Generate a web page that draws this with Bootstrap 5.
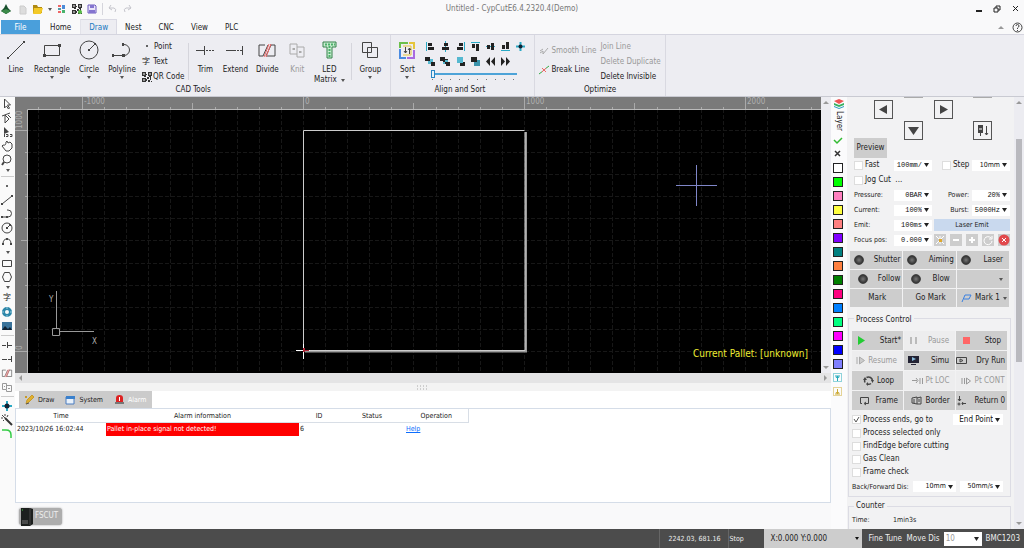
<!DOCTYPE html>
<html lang="en">
<head>
<meta charset="utf-8">
<meta name="viewport" content="width=device-width, initial-scale=1">
<title>Untitled - CypCutE6.4.2320.4(Demo)</title>
<link href="https://cdn.jsdelivr.net/npm/bootstrap@5.3.0/dist/css/bootstrap.min.css" rel="stylesheet">
<style>
body{font-family:"DejaVu Sans Condensed","Noto Sans CJK SC",sans-serif;font-size:8px;line-height:10px;color:#222;background:#f9f9fa;height:100vh;overflow:hidden}
button{border:0;padding:0;background:none;color:inherit;font:inherit;line-height:inherit}
svg{display:block;flex:none}
.ln{fill:none;stroke:#444;stroke-width:1}
.caret{width:0;height:0;border:2px solid transparent;border-top:3px solid #555;border-bottom:0;flex:none}
.dim{color:#999}
/* title bar and tabs */
.titlebar{height:20px;color:#777;padding-bottom:2px}
.qat{gap:5px}
.tabs{height:14px;gap:1px}
.tabs button{padding:3px 8px 1px}
.tabs .file{background:#4a9fdb;color:#fff;width:39px;margin:0 1px;padding-top:2px}
.tabs .active{background:#ededf2;color:#1878c0;box-shadow:0 0 0 1px #d9d9e3;clip-path:inset(-1px -1px 0 -1px);margin-left:1px}
/* ribbon */
.ribbon{background:#ededf2;border-top:1px solid #d5d5df;border-bottom:1px solid #c9cad2;height:63px}
.rgroup{border-right:1px solid #d9d9e1;padding-top:4px}
.rgroup.sorting{padding-right:6px}
.rname{margin-top:auto;padding-bottom:1px;text-align:center}
.tool{width:32px;display:flex;flex-direction:column;align-items:center;height:43px;white-space:nowrap}
.tool svg{width:24px;height:22px;margin-bottom:4px}
.tool .caret{margin-top:1px}
.w40{width:40px}.w36{width:36px}.w34{width:34px}.w28{width:28px}
.vsep{width:1px;background:#d5d5dc;align-self:stretch;margin:4px 2px}
.mini{display:flex;align-items:center;height:15px;gap:1px;white-space:nowrap}
.al svg{width:15px;height:15px}
.meter{appearance:none;width:86px;height:12px;background:linear-gradient(#4da3d8,#4da3d8) 0 4px/100% 2px no-repeat,repeating-linear-gradient(90deg,#777 0 1px,transparent 1px 9px) 1px 10px/100% 1px no-repeat;display:block;margin:0 0 0 8px}
.meter::-webkit-slider-thumb{appearance:none;width:4px;height:8px;background:#e8f4fb;border:1px solid #2a86c4;margin-top:-2px}
/* side bars */
.ltools{width:15px;background:#fafafa}
.ltools button{width:14px;height:14px;display:block}
.ltools .drop{height:7px;display:flex;justify-content:center;align-items:center}
.ltools hr{margin:2px 1px;opacity:1;border-color:#ccc;border-top-width:1px}
.layers{width:16px;background:#fbfbfc;padding:1px 0 0 2px}
.layers button{width:10px;height:10px;margin:2px 0 4px;display:block}
.sw{border:1px solid #222}
.lname{writing-mode:vertical-rl;line-height:12px;height:24px;padding-top:2px}
/* drawing area */
.stage{background:#000;height:276px;position:relative}
.stage svg text{font-size:8px;fill:#b0b0b0}
.pallet{position:absolute;right:13px;bottom:12px;color:#ee3;font-size:10px;line-height:14px}
.vbar{width:10px;background:#ececf1}
.hbar{height:10px;background:#e4e4e5}
.split{height:8px;background:#f3f3f3}
.up,.down,.left{width:0;height:0;border:3px solid transparent}
.up{border-bottom-color:#999;border-top:0}
.down{border-top-color:#999;border-bottom:0}
.left{border-right-color:#999;border-left:0}
.flip{transform:scaleX(-1)}
/* lower pane */
.logtabs button{background:#cbcbcb;height:17px;display:flex;align-items:center;gap:3px;font-size:7px;padding:0 6px 0 5px}
.logbox{border:1px solid #d5dde8;background:#fff;height:95px;font-size:7px}
.logbox table{width:452px;table-layout:fixed;line-height:13px}
.logbox th{font-weight:400;text-align:center;border-bottom:1px solid #d8dee6;border-top:0;padding:1px 0 0;line-height:12px}
.logbox th:last-child{border-right:1px solid #d8dee6}
.logbox td{padding:0 1px;white-space:nowrap}
.fs{background:#adadad;color:#eee;border-radius:3px;height:17px;padding:0 4px 0 2px;box-shadow:0 0 2px #999;display:flex;align-items:center;gap:2px}
/* control panel */
.panel{width:177px;background:#f9f9fa}
.pbody{background:#f2f2f3;padding:0 5px 0 3px;min-width:0}
.pad{display:grid;grid-template-columns:20px 19px 11px 19px 11px 19px 20px 19px;grid-template-rows:1px 2px 19px 2px 17px 2px 18px;padding-left:4px}
.pad button{border:1px solid #555;display:grid;place-items:center}
.pad .prev{border:0;background:#cdcdcd;width:33px}
.parm{display:grid;grid-template-columns:40px 38px 2px 38px 38px;grid-auto-rows:12px;row-gap:3px;align-items:center;padding:1px 0 1px 4px;font-size:7px}
.parm .r{text-align:right;padding-right:3px}
.combo{appearance:none;border:0;border-radius:0;height:11px;width:100%;background:#fff url("data:image/svg+xml,%3Csvg xmlns='http://www.w3.org/2000/svg' width='5' height='4'%3E%3Cpath d='M0 0h5L2.5 4z' fill='%23222'/%3E%3C/svg%3E") right 3px center no-repeat;font:7px/11px "Liberation Mono",monospace;padding:0 10px 0 0;text-align-last:right;color:#111}
.combo.sans{font-family:inherit}
.combo.endsel{width:50px;font-size:8px}
.combo.dis{width:44px}
.combo.tune{width:38px;height:14px;text-align-last:left;font-size:8px;color:#999}
.tick{appearance:none;width:9px;height:9px;border:1px solid #ddd;background:#fff;margin:0;flex:none}
.tick:checked{background:#fff url("data:image/svg+xml,%3Csvg xmlns='http://www.w3.org/2000/svg' width='7' height='7'%3E%3Cpath d='M1 3l2 3 3-5' fill='none' stroke='%23555'/%3E%3C/svg%3E") center no-repeat}
.chk{display:flex;align-items:center;gap:2px;font-size:8px}
.checks{gap:3px;margin-top:3px}
.fine{font-size:7px}
.emit{background:#c9d9ee;height:12px;grid-column:4/6}
.sq{background:#cdcdcd;width:12px;height:12px}
.btns{display:grid;grid-template-columns:repeat(3,minmax(0,1fr));gap:1px}
.btns button{background:#cdcdcd;height:18px;display:flex;align-items:center;justify-content:space-between;padding:0 2px 0 4px;white-space:nowrap}
.btns.proc{margin-top:6px}
.btns.proc button{height:19px}
.btns button.off{background:#ededee;color:#999}
.btns button.mid{justify-content:center;gap:3px}
.lamp{width:10px;height:10px;border-radius:50%;background:radial-gradient(#777,#333 70%);border:1px solid #444}
.box{border:1px solid #dcdce4;padding:0 3px;margin:4px -2px 0}
.box legend{float:none;width:auto;font-size:8px;line-height:10px;margin:0 0 0 2px;padding:0 2px}
.thumb{width:6px;height:223px;margin:35px auto auto 2px;background:#b9b9be}
/* status bar */
.status{height:19px;background:#4c4c4c;color:#eee}
.status .cell{border-left:1px solid #666;font-size:7px}
.coord{background:#cdcdcd;color:#222;width:98px;padding:0 3px 0 6px}
.coord .caret{border-top-color:#111}
.tunelabel{padding-left:6px}
</style>
</head>
<body class="d-flex flex-column">
<svg width="0" height="0" class="position-absolute" aria-hidden="true">
<defs>
<symbol id="line" viewBox="0 0 14 14"><path class="ln" d="M2 11L12 3"/><path d="M1 10h2v2H1zM11 2h2v2h-2z" fill="#444"/></symbol>
<symbol id="poly" viewBox="0 0 14 14"><path class="ln" d="M2 10h6a3.500 3.500 0 0 0 0-7H7"/><path d="M1 9h2v2H1zM6 9h2v2H6z" fill="#444"/></symbol>
<symbol id="circ" viewBox="0 0 14 14"><circle class="ln" cx="7" cy="7" r="5"/><path class="ln" d="M7 7l3-3"/><path d="M6 6h2v2H6zM9 3h2v2H9z" fill="#444"/></symbol>
<symbol id="trim" viewBox="0 0 24 22"><path class="ln" d="M3 11.500h8M11.500 7v9"/><path class="ln" stroke-dasharray="2 1" d="M13 11.500h8"/></symbol>
<symbol id="extend" viewBox="0 0 24 22"><path class="ln" d="M3 11.500h8M19.500 7v9"/><path class="ln" stroke-dasharray="2 1" d="M11 11.500h8"/></symbol>
<symbol id="divide" viewBox="0 0 24 22"><path class="ln" d="M10 6H4v11h4l5-11M15 6h5v11h-9l5-11"/><path d="M14 5L9 18M16 5l-5 13" stroke="#e66" fill="none"/></symbol>
<symbol id="knit" viewBox="0 0 24 22"><path d="M5 5h7v3h7v10h-7v-3H5zM12 8v7M7 10h3M14 13h3" stroke="#aaa" fill="none"/><path d="M8 9h2v2H8zM14 12h2v2h-2z" fill="#aaa"/></symbol>
<symbol id="qr" viewBox="0 0 10 10"><path d="M0 0h4v4H0zM6 0h4v4H6zM0 6h4v4H0zM5 5h2v2H5zM8 5h1v3H8zM6 8h2v2H6zM9 9h1v1H9zM4 2h1v1H4zM2 4h2v1H2zM7 4h2v1H7zM4 7h1v2H4z" fill="#333"/><path d="M1 1h2v2H1zM7 1h2v2H7zM1 7h2v2H1z" fill="#999"/></symbol>
<symbol id="cross" viewBox="0 0 14 14"><path d="M7 2v10M2 7h10" stroke="#29a9c5" stroke-width="2"/><circle cx="7" cy="7" r="2.500" fill="#123"/></symbol>
</defs>
</svg>

<header class="flex-shrink-0">
<div class="titlebar d-flex align-items-center position-relative">
 <div class="qat d-flex align-items-center">
  <svg width="12" height="12" viewBox="0 0 12 12"><path d="M6 1l2 4 3 3-5 3-5-3 3-3z" fill="#174d2c"/><path d="M1 8l5-2 5 2-5 3z" fill="#3c8a4a"/></svg>
  <svg width="10" height="12" viewBox="0 0 10 12"><path d="M3 3h4l2 2v6H3z" fill="#ddd" stroke="#ccc"/></svg>
  <svg width="11" height="12" viewBox="0 0 11 12"><path d="M1 2h4l1 2h4v6H1z" fill="#b08a12"/><path d="M2 5h9l-2 6H1z" fill="#f3c928"/></svg>
  <span class="caret"></span>
  <svg width="10" height="12" viewBox="0 0 10 12"><path d="M1 2h3v2H1zM1 8h3v2H1z" fill="#e66"/><path d="M1 5h3v2H1z" fill="#59a"/><path d="M5 2h3v4H5z" fill="#4b8bd8"/><path d="M5 7h3v3H5z" fill="#49b36c"/></svg>
  <svg width="10" height="10"><use href="#qr"/><circle cx="8" cy="8" r="2" fill="#5b4"/></svg>
  <svg width="10" height="10" viewBox="0 0 10 10"><path d="M1 1h7l1 1v7H1z" fill="#e9e4fa" stroke="#6c5bc0"/><path d="M3 1h4v3H3zM2 6h6v3H2z" fill="#8474d0"/></svg>
  <span class="vsep m-0"></span>
  <svg width="24" height="10" viewBox="0 0 24 10"><path d="M1 4h5q3 1 1 4M3 1L1 4l3 2M23 4h-5q-3 1-1 4M21 1l2 3-3 2" fill="none" stroke="#c5c5cc"/></svg>
 </div>
 <div class="position-absolute start-50 translate-middle-x">Untitled - CypCutE6.4.2320.4(Demo)</div>
 <div class="d-flex align-items-center ms-auto gap-2 pe-1">
  <button aria-label="Minimize"><svg width="10" height="10"><path d="M2 6h6v2H2z" fill="#222"/></svg></button>
  <button aria-label="Restore"><svg width="10" height="10"><path d="M2 4h4v4H2zM4 4V2h4v4H6" fill="none" stroke="#222"/></svg></button>
  <button aria-label="Close"><svg width="10" height="10"><path d="M3 2l5 5M8 2L3 7" stroke="#222"/></svg></button>
 </div>
</div>
<nav class="tabs d-flex align-items-stretch">
 <button class="file">File</button><button>Home</button><button class="active">Draw</button><button>Nest</button><button>CNC</button><button>View</button><button>PLC</button>
 <div class="ms-auto d-flex align-items-center gap-2"><span class="up"></span>
 <svg width="12" height="11"><circle cx="5.500" cy="5.500" r="4.500" fill="none" stroke="#444"/><path d="M4 4q0-1.500 1.500-1.500T7 4q0 1-1.500 2v1M5.500 8v1" fill="none" stroke="#444"/></svg></div>
</nav>
</header>

<div class="ribbon d-flex flex-shrink-0">
 <div class="rgroup d-flex flex-column pe-1">
  <div class="d-flex">
   <button class="tool"><svg viewBox="0 0 24 22"><path class="ln" d="M4 19L20 3"/><path d="M3 18h2v2H3zM19 2h2v2h-2z" fill="#444"/></svg>Line</button>
   <button class="tool w40"><svg viewBox="0 0 24 22"><path class="ln" d="M4.500 6.500h15v10h-15z"/><path d="M3 15h3v3H3zM18 5h3v3h-3z" fill="#444"/></svg>Rectangle<span class="caret"></span></button>
   <button class="tool w34"><svg viewBox="0 0 24 22"><circle class="ln" cx="12" cy="11" r="9"/><path class="ln" d="M12 11l6-6"/><path d="M11 10h2v2h-2zM17 4h2v2h-2z" fill="#444"/></svg>Circle<span class="caret"></span></button>
   <button class="tool"><svg viewBox="0 0 24 22"><path class="ln" d="M3 16.500h11a5.500 5.500 0 0 0 0-11h-1"/><path d="M2 15h2v3H2zM12 15h3v3h-3zM12 4h2v3h-2z" fill="#444"/></svg>Polyline<span class="caret"></span></button>
   <div class="ps-1">
    <button class="mini"><svg width="11" height="10"><circle cx="5" cy="4" r="1" fill="#333"/></svg>Point</button>
    <button class="mini"><span>字</span>&nbsp;Text</button>
    <button class="mini"><svg width="10" height="10"><use href="#qr"/></svg>QR Code</button>
   </div>
   <span class="vsep ms-1"></span>
   <button class="tool w28"><svg><use href="#trim"/></svg>Trim</button>
   <button class="tool"><svg><use href="#extend"/></svg>Extend</button>
   <button class="tool"><svg><use href="#divide"/></svg>Divide</button>
   <button class="tool w28 dim"><svg><use href="#knit"/></svg>Knit</button>
   <button class="tool w36"><svg viewBox="0 0 24 22"><path d="M6 3h13v5h-4v11h-5V8H6z" fill="#c9ecd0" stroke="#35824b"/><path d="M8 5.500h10M12.500 7v11" stroke="#4ab06a" stroke-width="2" stroke-dasharray="2 1" fill="none"/></svg>LED<span class="d-flex align-items-center gap-1">Matrix <i class="caret"></i></span></button>
   <span class="vsep ms-1"></span>
   <button class="tool"><svg viewBox="0 0 24 22"><path class="ln" d="M4.500 3.500h9v10h-9zM9.500 8.500h10v10h-10z"/></svg>Group<span class="caret"></span></button>
  </div>
  <div class="rname">CAD Tools</div>
 </div>
 <div class="rgroup sorting d-flex flex-column">
  <div class="d-flex">
   <button class="tool"><svg viewBox="0 0 24 22"><path d="M5 9V4h8" fill="none" stroke="#6cc04a" stroke-width="2"/><path d="M14 4h5v6" fill="none" stroke="#e5c53a" stroke-width="2"/><path d="M5 10v9h6" fill="none" stroke="#4a8be0" stroke-width="2"/><path d="M19 11v8h-7" fill="none" stroke="#a86be0" stroke-width="2"/><path d="M8 7h8v9H8" fill="none" stroke="#e5c53a"/><path class="ln" d="M10.500 8v6M9 12l1.500 2 1.500-2M14.500 15V9M13 11l1.500-2 1.500 2"/></svg>Sort<span class="caret"></span></button>
   <div>
    <div class="d-flex al">
     <button class="mini" aria-label="Align left"><svg viewBox="0 0 15 15"><path d="M3.500 3v9" stroke="#29a9c5"/><path d="M5 4h4v3H5zM5 8h6v3H5z" fill="#222"/></svg></button>
     <button class="mini" aria-label="Align center"><svg viewBox="0 0 15 15"><path d="M7.500 2v11" stroke="#29a9c5"/><path d="M6 4h4v3H6zM4 8h7v3H4z" fill="#222"/></svg></button>
     <button class="mini" aria-label="Align right"><svg viewBox="0 0 15 15"><path d="M11.500 3v9" stroke="#29a9c5"/><path d="M6 4h4v3H6zM4 8h6v3H4z" fill="#222"/></svg></button>
     <button class="mini" aria-label="Align top"><svg viewBox="0 0 15 15"><path d="M3 3.500h9" stroke="#29a9c5"/><path d="M4 5h3v4H4zM8 5h3v7H8z" fill="#222"/></svg></button>
     <button class="mini" aria-label="Align middle"><svg viewBox="0 0 15 15"><path d="M3 7.500h9" stroke="#29a9c5"/><path d="M4 6h3v4H4zM8 4h3v7H8z" fill="#222"/></svg></button>
     <button class="mini" aria-label="Align bottom"><svg viewBox="0 0 15 15"><path d="M3 11.500h9" stroke="#29a9c5"/><path d="M4 6h3v4H4zM8 3h3v7H8z" fill="#222"/></svg></button>
     <button class="mini" aria-label="Align both"><svg viewBox="0 0 15 15"><path d="M7.500 3v9M3 7.500h9" stroke="#29a9c5" stroke-width="2"/><circle cx="7.500" cy="7.500" r="2" fill="#123"/></svg></button>
    </div>
    <div class="d-flex al">
     <button class="mini" aria-label="Order 1"><svg viewBox="0 0 15 15"><path d="M5 5h5v5H5z" fill="#55b8d0"/><path d="M2 3h5v4H2zM8 8h4v4H8z" fill="#222"/></svg></button>
     <button class="mini" aria-label="Order 2"><svg viewBox="0 0 15 15"><path d="M5 5h5v5H5z" fill="#222"/><path d="M7 6h3v2H7zM5 8h2v2H5z" fill="#55b8d0"/><path d="M2 3h5v4H2zM8 8h4v4H8z" fill="#222"/></svg></button>
     <button class="mini" aria-label="Order 3"><svg viewBox="0 0 15 15"><path d="M7 8h5v4H7z" fill="#222"/><path d="M4 3h6v6H4z" fill="#55b8d0"/></svg></button>
     <button class="mini" aria-label="Order 4"><svg viewBox="0 0 15 15"><path d="M6 6h6v6H6z" fill="#3a93ac"/><path d="M3 3h6v5H3z" fill="#222"/></svg></button>
     <button class="mini" aria-label="Previous"><svg viewBox="0 0 15 15"><path d="M7 3v9L3 7.500zM12 3v9L8 7.500z" fill="#222"/></svg></button>
     <button class="mini" aria-label="Next"><svg viewBox="0 0 15 15"><path d="M3 3v9l4-4.500zM8 3v9l4-4.500z" fill="#222"/></svg></button>
    </div>
    <input class="meter" type="range" min="0" max="10" value="0" aria-label="Sort step">
   </div>
  </div>
  <div class="rname">Align and Sort</div>
 </div>
 <div class="rgroup d-flex flex-column">
  <div class="d-flex gap-1 ps-1 pe-1">
   <div class="d-flex flex-column gap-1 pt-1">
    <button class="mini dim"><svg width="11" height="10"><path d="M1 7l3-2v3l5-6M1 5l3-2" fill="none" stroke="#aaa"/></svg>Smooth Line</button>
    <button class="mini"><svg width="11" height="10"><path d="M0 9l4-3M6 4l4-3" stroke="#3a4"/><path d="M3 3l4 4M7 3L3 7" stroke="#e66"/></svg>Break Line</button>
   </div>
   <div>
    <button class="mini dim">Join Line</button><button class="mini dim">Delete Duplicate</button><button class="mini">Delete Invisible</button>
   </div>
  </div>
  <div class="rname">Optimize</div>
 </div>
</div>

<main class="d-flex flex-grow-1 overflow-hidden">
 <div class="ltools">
  <button aria-label="Select"><svg width="14" height="14"><path class="ln" d="M4.500 2v9l2-2 2 3 1-1-2-3h3z"/></svg></button>
  <button aria-label="Node"><svg width="14" height="14"><path class="ln" d="M2 5l8-3M5 4v8l4-4zM8 4l3 3"/></svg></button>
  <button aria-label="Sequence"><svg width="14" height="14"><path d="M4 2v7l5-2z" fill="#444"/><path class="ln" d="M4.500 9v3M6 9.500h2v2H6M10 9.500h2v2h-2"/></svg></button>
  <button aria-label="Pan"><svg width="14" height="14"><path class="ln" d="M3 6q3 1 3-3l1-1 1 2 2-1 2 2v4l-3 3H6L2 7z"/></svg></button>
  <button aria-label="Zoom"><svg width="14" height="14"><circle class="ln" cx="7" cy="6" r="4"/><path d="M4 9l-2 3" stroke="#444" stroke-width="2"/></svg></button>
  <span class="drop"><i class="caret"></i></span><hr>
  <button aria-label="Point"><svg width="14" height="14"><circle cx="7" cy="7" r="1" fill="#333"/></svg></button>
  <button aria-label="Line"><svg width="14" height="14"><use href="#line"/></svg></button>
  <button aria-label="Polyline"><svg width="14" height="14"><use href="#poly"/></svg></button>
  <button aria-label="Circle"><svg width="14" height="14"><use href="#circ"/></svg></button>
  <button aria-label="Arc"><svg width="14" height="14"><path class="ln" d="M3 9q0-5 4-5t4 5"/><path d="M2 8h2v2H2zM10 8h2v2h-2zM6 3h2v2H6z" fill="#444"/></svg></button>
  <span class="drop"><i class="caret"></i></span>
  <button aria-label="Rectangle"><svg width="14" height="14"><path class="ln" d="M2.500 4.500h9v6h-9z"/></svg></button>
  <button aria-label="Polygon"><svg width="14" height="14"><path class="ln" d="M4.500 2.500h5l2 4.500-2 4.500h-5L2.500 7z"/></svg></button>
  <span class="drop"><i class="caret"></i></span>
  <button>字</button>
  <button aria-label="Ring"><svg width="14" height="14"><circle cx="7" cy="7" r="3.500" fill="none" stroke="#2c86a8" stroke-width="3"/><path d="M7 2v2M7 10v2M2 7h2M10 7h2" stroke="#9cd"/></svg></button>
  <button aria-label="Picture"><svg width="14" height="14"><path d="M2 3h10v8H2z" fill="#39729a"/><path d="M2 11l3-4 3 3 2-2 2 3z" fill="#123"/></svg></button>
  <hr>
  <button aria-label="Trim"><svg width="14" height="14"><path class="ln" d="M2 7.500h4M7.500 4v6M8 7.500h4"/></svg></button>
  <button aria-label="Extend"><svg width="14" height="14"><path class="ln" d="M2 7.500h5M8 7.500h3M11.500 4v6"/></svg></button>
  <button aria-label="Divide"><svg width="14" height="14" viewBox="0 0 24 22"><use href="#divide"/></svg></button>
  <button aria-label="Knit"><svg width="14" height="14"><path d="M2.500 3.500h4v2h5v6h-5v-2h-4zM6.500 5v4M4 6.500h1M8 8.500h2" fill="none" stroke="#999"/></svg></button>
  <hr>
  <button aria-label="Center"><svg width="14" height="14"><use href="#cross"/></svg></button>
  <button aria-label="Wand"><svg width="14" height="14"><path d="M5 5l7 7" stroke="#333" stroke-width="2"/><path class="ln" d="M2 2l3 3M5 1v2M1 5h2M8 2L7 4M3 8l1-1"/></svg></button>
  <button aria-label="Round corner"><svg width="14" height="14"><path d="M2 3h4q5 0 5 5v3" fill="none" stroke="#3c4" stroke-width="1.500"/></svg></button>
 </div>

 <section class="flex-grow-1 d-flex flex-column overflow-hidden">
  <div class="d-flex">
   <div class="stage flex-grow-1">
    <svg width="100%" height="100%">
     <defs>
      <pattern id="gv" x="67" y="0" width="221" height="600" patternUnits="userSpaceOnUse"><path d="M.5 0v600M22.500 0v600M44.500 0v600M66.500 0v600M88.500 0v600M110.500 0v600M133.500 0v600M155.500 0v600M177.500 0v600M199.500 0v600" stroke="#171717" stroke-dasharray="4 2"/></pattern>
      <pattern id="gh" x="0" y="33" width="1200" height="221" patternUnits="userSpaceOnUse"><path d="M0 .5h1200M0 22.500h1200M0 44.500h1200M0 66.500h1200M0 88.500h1200M0 110.500h1200M0 133.500h1200M0 155.500h1200M0 177.500h1200M0 199.500h1200" stroke="#171717" stroke-dasharray="4 2"/></pattern>
      <pattern id="rt" x="67" y="0" width="221" height="13" patternUnits="userSpaceOnUse"><path d="M.5 0v13M110.500 6v7M22.500 10v3M44.500 10v3M66.500 10v3M88.500 10v3M133.500 10v3M155.500 10v3M177.500 10v3M199.500 10v3" stroke="#aaa"/></pattern>
      <pattern id="rl" x="0" y="33" width="13" height="221" patternUnits="userSpaceOnUse"><path d="M0 .5h13M6 110.500h7M10 22.500h3M10 44.500h3M10 66.500h3M10 88.500h3M10 133.500h3M10 155.500h3M10 177.500h3M10 199.500h3" stroke="#aaa"/></pattern>
     </defs>
     <rect width="100%" height="100%" fill="url(#gv)"/><rect width="100%" height="100%" fill="url(#gh)"/>
     <rect width="100%" height="13" fill="#7a7a7a"/><rect width="13" height="100%" fill="#7a7a7a"/>
     <rect x="13" width="100%" height="13" fill="url(#rt)"/><rect y="13" width="13" height="100%" fill="url(#rl)"/>
     <path d="M12.500 2000V12.500H2000" fill="none" stroke="#bbb"/>
     <text x="69" y="7">-1000</text><text x="290" y="7">0</text><text x="511" y="7">1000</text><text x="732" y="7">2000</text>
     <text transform="translate(7 32) rotate(-90)">1000</text><text transform="translate(7 253) rotate(-90)">0</text>
     <path d="M288.500 254V33.500h221" fill="none" stroke="#ccc"/>
     <path d="M290 254.500h221V35" fill="none" stroke="#999" stroke-width="2"/><path d="M290 253.500h220V35" fill="none" stroke="#ccc"/>
     <path d="M281 253.500h14M288.500 247v15" stroke="#fff"/><path d="M288 251h2v4h-2zM288 253h6v1h-6z" fill="#a23"/>
     <path d="M661 88.500h41M681.500 68v41" stroke="#7f86c8"/>
     <path d="M37.500 231.500h7v7h-7zM41.500 231v-37M45 234.500h34" fill="none" stroke="#999"/>
     <text x="34" y="205">Y</text><text x="77" y="247">X</text>
    </svg>
    <div class="pallet">Current Pallet: [unknown]</div>
   </div>
   <div class="vbar d-flex flex-column justify-content-between align-items-center py-1"><span class="up"></span><span class="down"></span></div>
  </div>
  <div class="hbar d-flex justify-content-between align-items-center px-1"><span class="left"></span><span class="left flip"></span></div>
  <div class="split d-flex justify-content-center align-items-center"><svg width="12" height="5"><path d="M0 1h12M0 4h12" stroke="#aaa" stroke-dasharray="1 2"/></svg></div>
  <div class="bg-white">
   <div class="logtabs d-flex ps-1">
    <button><svg width="11" height="11"><path d="M1 2l2 2M3 2L1 4M2 10l1-4 5-5 2 2-5 5z" fill="#e0b030" stroke="#c79a2a"/><path d="M2 10l3-1" stroke="#555"/></svg>Draw</button>
    <button><svg width="11" height="11"><path d="M1 3h8v7H1z" fill="#e8f1fb" stroke="#4a7cc0"/><path d="M1 2h9v3H1z" fill="#3a80cc"/></svg>System</button>
    <button class="text-white"><svg width="11" height="11"><path d="M2 8V4q0-3 3.500-3T9 4v4z" fill="#d22"/><path d="M5 3h1v4H5z" fill="#fff"/><path d="M1 8h9v2H1z" fill="#777"/></svg>Alarm</button>
   </div>
   <div class="logbox">
    <table>
     <colgroup><col style="width:90px"><col style="width:193px"><col style="width:40px"><col style="width:66px"><col style="width:63px"></colgroup>
     <thead><tr><th>Time</th><th>Alarm information</th><th>ID</th><th>Status</th><th>Operation</th></tr></thead>
     <tbody><tr><td>2023/10/26 16:02:44</td><td style="background:#f00;color:#fff">Pallet in-place signal not detected!</td><td>6</td><td></td><td><a href="#">Help</a></td></tr></tbody>
    </table>
   </div>
  </div>
  <div class="d-flex align-items-center flex-grow-1 ps-1">
   <button class="fs"><svg width="12" height="19" viewBox="0 0 12 19"><path d="M0 1h9l3 1v15l-3 2H0z" fill="#1c1f1e"/><path d="M9 1v17" stroke="#444"/><path d="M1 14h6M1 16h6" stroke="#777"/><path d="M1 3h1" stroke="#4c4"/></svg>FSCUT</button>
  </div>
 </section>

 <div class="layers">
  <svg width="11" height="11"><path d="M1 3l5-2 5 2-5 3z" fill="#e55"/><path d="M1 5l5 2 5-2v2L6 9 1 7z" fill="#38b060"/><path d="M1 8l5 2 5-2v1l-5 2-5-2z" fill="#2a9ac0"/></svg>
  <div class="lname">Layer</div>
  <button aria-label="Accept"><svg width="10" height="10"><path d="M1 5l3 3 5-5" fill="none" stroke="#3b3" stroke-width="1.500"/></svg></button>
  <button aria-label="Cancel"><svg width="10" height="10"><path d="M2 2l5 5M7 2L2 7" stroke="#333" stroke-width="1.500"/></svg></button>
  <div class="swatches"></div>
  <button aria-label="First"><svg width="10" height="10"><path d="M.5.500h8v8h-8z" fill="none" stroke="#2ab" stroke-dasharray="1 1"/><path d="M2 3h5M4.500 3v5M3 5l1.500-2L6 5" fill="none" stroke="#2ab"/></svg></button>
  <button aria-label="Last"><svg width="10" height="10"><path d="M.5.500h8v8h-8z" fill="none" stroke="#ca3" stroke-dasharray="1 1"/><path d="M2 7h5M4.500 2v5M3 5l1.500 2L6 5" fill="none" stroke="#ca3"/></svg></button>
 </div>

 <aside class="panel d-flex">
  <div class="pbody flex-grow-1">
   <div class="pad">
    <span style="grid-area:1/4;background:#aaa"></span><span style="grid-area:1/8;background:#aaa"></span>
    <button aria-label="Left" style="grid-area:3/2"><svg width="9" height="9"><path d="M8 0v9L0 4.500z" fill="#444"/></svg></button>
    <button aria-label="Right" style="grid-area:3/6"><svg width="9" height="9"><path d="M1 0v9l8-4.500z" fill="#444"/></svg></button>
    <button aria-label="Down" style="grid-area:5/4/7/5"><svg width="11" height="9"><path d="M0 1h11L5.500 9z" fill="#444"/></svg></button>
    <button aria-label="Head down" style="grid-area:5/8/7/9"><svg width="13" height="13"><path d="M2 1h5v8H2z" fill="#444"/><path d="M3 5h3" stroke="#fff"/><path d="M4.500 9v3M10.500 2v9M9 9l1.500 2L12 9" fill="none" stroke="#444"/></svg></button>
    <button class="prev" style="grid-area:6/1/8/4">Preview</button>
   </div>
   <div class="parm">
    <label class="chk"><input type="checkbox" class="tick">Fast</label><select class="combo" aria-label="Fast speed"><option>100mm/</option></select><span></span>
    <label class="chk ps-2"><input type="checkbox" class="tick">Step</label><select class="combo sans" aria-label="Step"><option>10mm</option></select>
    <label class="chk" style="grid-column:1/3"><input type="checkbox" class="tick">Jog Cut &nbsp;...</label><span style="grid-column:3/6"></span>
    <label for="pr">Pressure:</label><select id="pr" class="combo"><option>0BAR</option></select><span></span><label for="pw" class="r">Power:</label><select id="pw" class="combo"><option>20%</option></select>
    <label for="cu">Current:</label><select id="cu" class="combo"><option>100%</option></select><span></span><label for="bu" class="r">Burst:</label><select id="bu" class="combo"><option>5000Hz</option></select>
    <label for="em">Emit:</label><select id="em" class="combo"><option>100ms</option></select><span></span><button class="emit">Laser Emit</button>
    <label for="fo" class="text-nowrap">Focus pos:</label><select id="fo" class="combo"><option>0.000</option></select><span></span>
    <div class="d-flex justify-content-between" style="grid-column:4/6">
     <button class="sq" aria-label="Center"><svg width="12" height="12"><path d="M2 2l8 8M10 2l-8 8M6 2v8" stroke="#fff"/><path d="M5 5h3v3H5z" fill="#e0a82a"/></svg></button>
     <button class="sq" aria-label="Minus"><svg width="12" height="12"><path d="M3 6h6" stroke="#fff" stroke-width="2"/></svg></button>
     <button class="sq" aria-label="Plus"><svg width="12" height="12"><path d="M3 6h6M6 3v6" stroke="#fff" stroke-width="2"/></svg></button>
     <button class="sq" aria-label="Redo"><svg width="12" height="12"><path d="M9 4a4 4 0 1 0 1 3M10 2v3H7" fill="none" stroke="#fff"/></svg></button>
     <button class="sq" aria-label="Stop focus"><svg width="12" height="12"><circle cx="6" cy="6" r="5.500" fill="#e2494c"/><path d="M4 4l4 4M8 4L4 8" stroke="#fff"/></svg></button>
    </div>
   </div>
   <div class="btns mt-1">
    <button><span class="lamp"></span>Shutter</button><button><span class="lamp"></span>Aiming</button><button><span class="lamp"></span><span class="pe-1">Laser</span></button>
    <button class="ps-2"><span class="lamp"></span>Follow</button><button class="ps-2"><span class="lamp"></span><span class="pe-1">Blow</span></button><button aria-label="More"><span></span><span class="caret me-1"></span></button>
    <button class="mid">Mark</button><button class="mid">Go Mark</button><button class="mid"><svg width="11" height="9"><path d="M1 8l3-7h6L8 5H3" fill="none" stroke="#3a80e0"/></svg>Mark 1<span class="caret"></span></button>
   </div>
   <fieldset class="box">
    <legend class="mt-1 mb-0 pt-1">Process Control</legend>
    <div class="btns proc">
     <button><svg width="11" height="11"><path d="M2 1v9l7-4.500z" fill="#2c3"/></svg><span>Start*</span></button>
     <button class="off"><svg width="11" height="11"><path d="M3 2v7M8 2v7" stroke="#bbb" stroke-width="2"/></svg><span class="pe-1">Pause</span></button>
     <button><svg width="11" height="11"><path d="M3 2h7v7H3z" fill="#f66"/></svg><span class="pe-1">Stop</span></button>
     <button class="off"><svg width="9" height="11"><path d="M1 2v7M3.500 2v7l5-3.500z" fill="#ccc" stroke="#aaa"/></svg><span class="pe-1">Resume</span></button>
     <button><svg width="11" height="11"><path d="M0 1h11v7H0zM3 9h5v1H3z" fill="#223"/><path d="M4 2v4l4-2z" fill="#8bd"/></svg><span class="pe-1">Simu</span></button>
     <button class="ps-0"><svg width="11" height="11"><path class="ln" d="M.5 2.500h10v6H.5zM4 4l3 1.500L4 7z"/></svg>Dry Run</button>
     <button class="mid"><svg width="11" height="11"><path d="M3.500 2.500A4 4 0 0 1 9.500 6M8 8.500A4 4 0 0 1 4 9M2 7.500A4 4 0 0 1 2 4" fill="none" stroke="#444" stroke-width="1.500"/><path d="M8 5h3L9.500 8zM5 7v4L3 9zM0 5h4L2 2z" fill="#444"/></svg>Loop</button>
     <button class="off mid"><svg width="11" height="11"><path d="M0 5.500h5M4 3l2 2.500L4 8M8 3v6M10.500 3v6" fill="none" stroke="#999"/></svg>Pt LOC</button>
     <button class="off mid"><svg width="11" height="11"><path d="M1 3v6M3.500 3v6M5.500 3v6l4-3z" fill="none" stroke="#999"/></svg>Pt CONT</button>
     <button class="mid"><svg width="11" height="11"><path class="ln" d="M3 8.500H1.500v-6h8v6H6M7 7L5 8.500 7 10"/></svg>&nbsp;Frame</button>
     <button class="mid"><svg width="11" height="11"><path class="ln" d="M1 3l5-1v7l-5-1zM6 3l4-1v7H6M3 4v4M8 4v3"/></svg>Border</button>
     <button class="ps-0"><svg width="11" height="11"><path class="ln" d="M3.500 1v5M2 4l1.500 2L5 4M6 8.500h4M7 7L6 8.500 7 10"/><circle class="ln" cx="3" cy="9" r="1"/></svg>Return 0</button>
    </div>
    <div class="d-flex justify-content-between mt-1 pe-1">
     <label class="chk"><input type="checkbox" class="tick" checked>Process ends, go to</label>
     <select class="combo sans endsel" aria-label="End position"><option>End Point</option></select>
    </div>
    <div class="d-grid checks">
     <label class="chk"><input type="checkbox" class="tick">Process selected only</label>
     <label class="chk"><input type="checkbox" class="tick">FindEdge before cutting</label>
     <label class="chk"><input type="checkbox" class="tick">Gas Clean</label>
     <label class="chk"><input type="checkbox" class="tick">Frame check</label>
    </div>
    <div class="fine d-flex align-items-center gap-1 mt-1 pb-1 pe-1"><label for="bf" class="me-auto text-nowrap">Back/Forward Dis:</label>
     <select id="bf" class="combo sans dis"><option>10mm</option></select><select class="combo sans dis" aria-label="Back speed"><option>50mm/s</option></select></div>
   </fieldset>
   <fieldset class="box"><legend>Counter</legend><div class="fine d-flex pt-1 pb-3"><span style="width:41px">Time:</span><span>1min3s</span></div></fieldset>
  </div>
  <div class="vbar d-flex flex-column py-1"><span class="up mx-auto"></span><span class="thumb"></span><span class="down mx-auto"></span></div>
 </aside>
</main>

<footer class="status d-flex align-items-stretch flex-shrink-0">
 <div class="ms-auto cell d-flex align-items-center ps-2 pe-2">2242.03, 681.16</div>
 <div class="cell d-flex align-items-center" style="width:36px">Stop</div>
 <div class="coord d-flex align-items-center justify-content-between">X:0.000 Y:0.000<span class="caret"></span></div>
 <label class="tunelabel d-flex align-items-center" for="ft">Fine Tune &nbsp;Move Dis</label>
 <div class="d-flex align-items-center px-1"><select id="ft" class="combo sans tune"><option>&nbsp;10</option></select></div>
 <div class="d-flex align-items-center pe-1">BMC1203</div>
</footer>
<script>
const layerColors=['#ffffff','#00ff00','#ff80c0','#ffff40','#ff8080','#8000ff','#008080','#ff8040','#008000','#ff0080','#0080ff','#00ff80','#ff00ff','#0000ff','#8080ff'];
const list=document.querySelector('.swatches');
layerColors.forEach((c,i)=>{const b=document.createElement('button');b.className='sw';b.style.background=c;b.setAttribute('aria-label','Layer '+i);list.append(b);});
</script>
<script src="https://cdn.jsdelivr.net/npm/bootstrap@5.3.0/dist/js/bootstrap.bundle.min.js"></script>
</body>
</html>
